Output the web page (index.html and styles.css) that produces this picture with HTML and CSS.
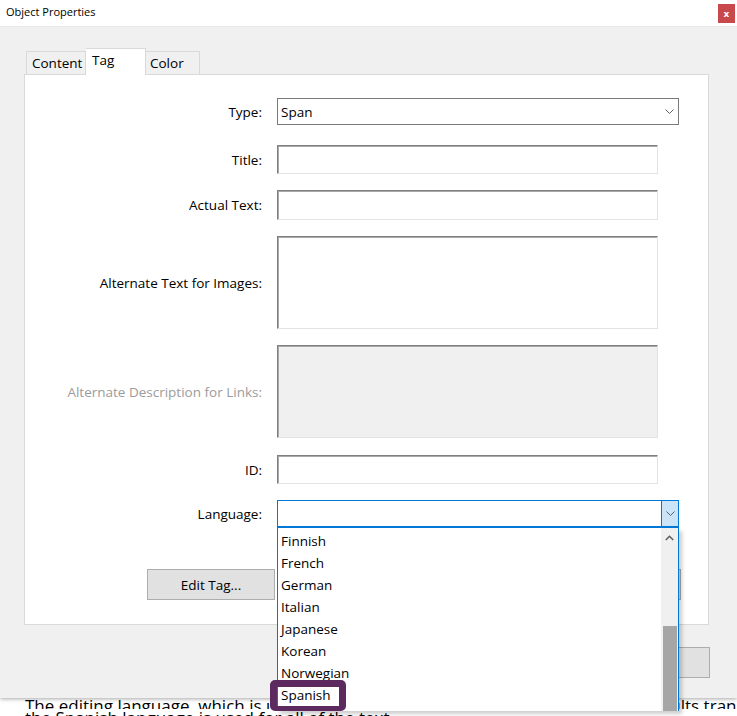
FILE: index.html
```html
<!DOCTYPE html>
<html lang="en">
<head>
  <meta charset="UTF-8">
  <title>Object Properties</title>
  <link rel="stylesheet" href="styles.css">
</head>
<body>
  <div class="dialog">
    <div class="titlebar">
      <span class="title">Object Properties</span>
      <button class="close">x</button>
    </div>

    <div class="dialog-body">
      <div class="tabs">
        <div class="tab tab-content">Content</div>
        <div class="tab active">Tag</div>
        <div class="tab tab-color">Color</div>
      </div>

      <div class="panel">
        <div class="row">
          <label>Type:</label>
          <div class="select">
            <span>Span</span>
            <svg class="chevron" width="9" height="6" viewBox="0 0 9 6"><polyline points="0.5,0.5 4.5,4.5 8.5,0.5"/></svg>
          </div>
        </div>
        <div class="row row-title">
          <label>Title:</label>
          <div class="field"></div>
        </div>
        <div class="row">
          <label>Actual Text:</label>
          <div class="field field-tall"></div>
        </div>
        <div class="row">
          <label>Alternate Text for Images:</label>
          <div class="field field-area"></div>
        </div>
        <div class="row disabled">
          <label>Alternate Description for Links:</label>
          <div class="field field-area"></div>
        </div>
        <div class="row row-id">
          <label>ID:</label>
          <div class="field"></div>
        </div>
        <div class="row">
          <label>Language:</label>
          <div class="combo">
            <div class="combo-btn">
              <svg class="chevron" width="9" height="6" viewBox="0 0 9 6"><polyline points="0.5,0.5 4.5,4.5 8.5,0.5"/></svg>
            </div>
            <!-- open language list -->
            <div class="dropdown">
              <ul class="options">
                <li>Finnish</li>
                <li>French</li>
                <li>German</li>
                <li>Italian</li>
                <li>Japanese</li>
                <li>Korean</li>
                <li>Norwegian</li>
                <li class="picked">Spanish<span class="mark"></span></li>
              </ul>
              <div class="scrollbar">
                <div class="sb-up">
                  <svg width="9" height="6" viewBox="0 0 9 6"><polyline points="0.8,5 4.5,1.3 8.2,5"/></svg>
                </div>
                <div class="sb-thumb"></div>
              </div>
            </div>
          </div>
        </div>

        <div class="panel-buttons">
          <button class="btn btn-edit">Edit Tag...</button>
          <button class="btn btn-side"></button>
        </div>
      </div>

      <div class="dialog-buttons">
        <button class="btn btn-close">Close</button>
      </div>
    </div>
  </div>

  <div class="page">
    <div class="doc-line doc-line-cut">The editing language, which is used for spell checking, defaults to the one that results translate into</div>
    <div class="doc-line">the Spanish language is used for all of the text.</div>
  </div>
</body>
</html>
```

FILE: styles.css
```css
body {
  margin: 0;
  width: 737px;
  height: 716px;
  overflow: hidden;
  background: #fff;
  font-family: 'Open Sans', sans-serif;
  font-size: 13.5px;
  color: #000;
}
button {
  font-family: inherit;
  font-size: 13.5px;
  color: #000;
}

/* Dialog window */
.dialog {
  position: relative;
  z-index: 2;
  height: 698px;
  background: #f0f0f0;
  box-shadow: 0 1px 4px rgba(0, 0, 0, 0.35);
}
.titlebar {
  display: flex;
  justify-content: space-between;
  align-items: flex-start;
  height: 26px;
  background: #fff;
  border-bottom: 1px solid #e8e8e8;
}
.title {
  font-size: 11px;
  padding: 4px 0 0 6px;
}
.close {
  width: 17px;
  height: 19px;
  margin: 4px 2px 0 0;
  padding: 0;
  border: 0;
  background: #c8484b;
  color: #fff;
  font: bold 9px 'DejaVu Sans', sans-serif;
}
.dialog-body {
  padding: 21px 28px 0 24px;
}

/* Tabs */
.tabs {
  position: relative;
  z-index: 1;
  display: flex;
  align-items: flex-end;
  padding-left: 2px;
}
.tab {
  box-sizing: border-box;
  height: 23px;
  padding: 2px 0 0 5px;
  border: 1px solid #d9d9d9;
  border-bottom: 0;
  background: #f0f0f0;
}
.tab-content { width: 60px; }
.tab-color { width: 54px; padding-left: 4px; border-left: 0; }
.tab.active {
  width: 60px;
  height: 27px;
  margin-bottom: -1px;
  padding: 2px 0 0 6px;
  border-left: 0;
  background: #fff;
}

.panel {
  box-sizing: border-box;
  height: 551px;
  padding-top: 23px;
  border: 1px solid #d9d9d9;
  background: #fff;
}

/* Form rows */
.row {
  display: flex;
  align-items: center;
}
.row + .row { margin-top: 16px; }
.row.row-title { margin-top: 20px; }
.row.row-id { margin-top: 17px; }
.row label {
  width: 237px;
  padding-right: 15px;
  text-align: right;
}
.row.disabled label { color: #9b9b9b; }

.select {
  box-sizing: border-box;
  display: flex;
  justify-content: space-between;
  align-items: center;
  width: 402px;
  height: 27px;
  padding: 0 4px 0 3px;
  border: 1px solid #7a7a7a;
  background: #fff;
}
.chevron polyline {
  fill: none;
  stroke: #606060;
  stroke-width: 1;
}
.field {
  box-sizing: border-box;
  width: 381px;
  height: 29px;
  border: 1px solid;
  border-color: #7f7f7f #e3e3e3 #e3e3e3 #7f7f7f;
  box-shadow: inset 1px 1px 0 #a8a8a8;
  background: #fff;
}
.field-tall { height: 30px; }
.field-area { height: 93px; }
.disabled .field { background: #f0f0f0; }

/* Language combo box, dropped down */
.combo {
  position: relative;
  box-sizing: border-box;
  display: flex;
  justify-content: flex-end;
  width: 402px;
  height: 28px;
  border: 1px solid #0078d7;
  border-bottom-width: 2px;
  background: #fff;
}
.combo-btn {
  display: flex;
  justify-content: center;
  align-items: center;
  width: 16px;
  border-left: 1px solid #0078d7;
  background: #cce4f7;
}
.dropdown {
  position: absolute;
  z-index: 5;
  top: calc(100% + 2px);
  left: -1px;
  box-sizing: border-box;
  width: 402px;
  height: 183px;
  border-left: 1px solid #0078d7;
  border-right: 1px solid #0078d7;
  background: #fff;
  box-shadow: 3px 3px 4px rgba(0, 0, 0, 0.2);
}
.options {
  list-style: none;
  margin: 0;
  padding: 2px 0 0;
}
.options li {
  position: relative;
  height: 22px;
  padding-left: 3px;
  line-height: 22px;
}
.mark {
  position: absolute;
  left: -8px;
  top: -4px;
  box-sizing: border-box;
  width: 76px;
  height: 31px;
  border: 7px solid #5c2a5e;
  border-bottom-width: 5px;
  border-radius: 5px;
}
.scrollbar {
  position: absolute;
  top: 0;
  right: 0;
  bottom: 0;
  width: 17px;
  background: #f0f0f0;
}
.sb-up {
  display: flex;
  justify-content: center;
  align-items: center;
  height: 19px;
}
.sb-up polyline {
  fill: none;
  stroke: #606060;
  stroke-width: 1.6;
}
.sb-thumb {
  margin: 79px 1px 0 2px;
  height: 85px;
  background: #a6a6a6;
}

/* Buttons */
.btn {
  box-sizing: border-box;
  height: 31px;
  border: 1px solid #adadad;
  background: #e1e1e1;
}
.panel-buttons {
  display: flex;
  justify-content: space-between;
  margin-top: 41px;
  padding: 0 27px 0 122px;
}
.btn-edit { width: 128px; }
.btn-side { width: 120px; }
.dialog-buttons {
  display: flex;
  justify-content: flex-end;
  margin: 22px -1px 0 0;
}
.btn-close { width: 110px; }

/* Document text behind the dialog */
.page {
  position: relative;
  z-index: 1;
  margin-top: -1px;
  padding-left: 25px;
  font-size: 17px;
  line-height: 17px;
  white-space: nowrap;
}
.doc-line {
  height: 10px;
  overflow: hidden;
}
.doc-line-cut { height: 12px; }
```
